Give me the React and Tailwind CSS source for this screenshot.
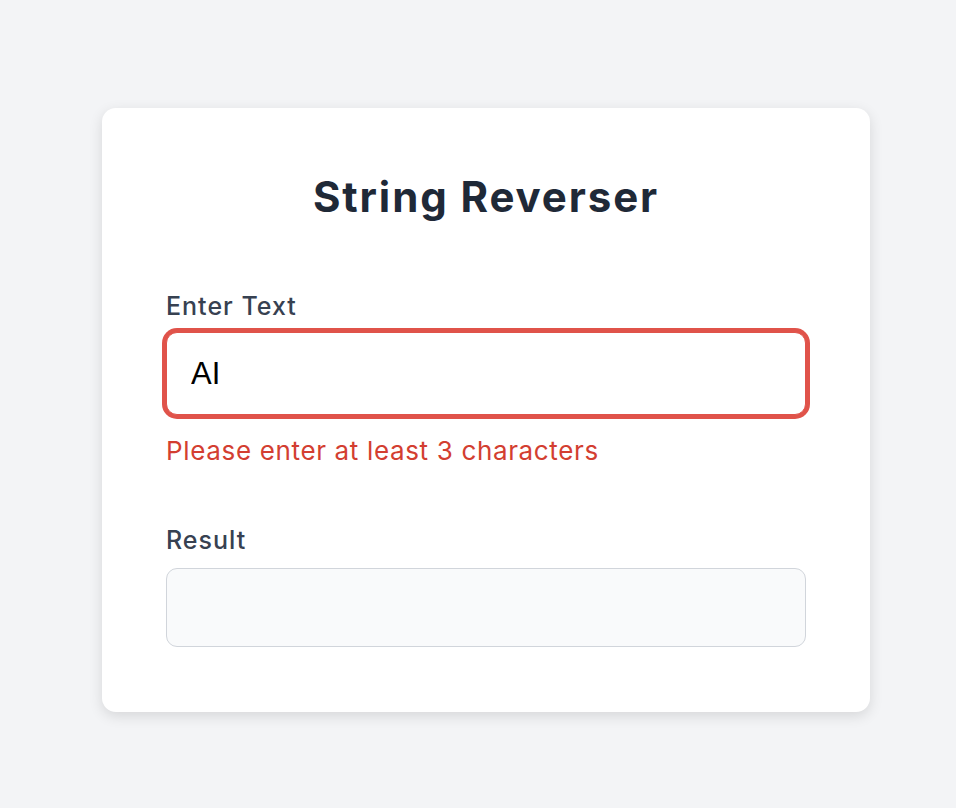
import { useState } from 'react';

export default function App() {
    const [text, setText] = useState('AI');
    const tooShort = text.length < 3;
    const result = tooShort ? '' : text.split('').reverse().join('');

    return (
        <div className="min-h-screen bg-[#f3f4f6] pt-[108px] pb-[96px]" style={{ fontFamily: 'Inter, "Noto Sans", sans-serif' }}>
            <div className="w-[768px] ml-[102px] bg-white rounded-[14px] shadow-[0_4px_14px_rgba(0,0,0,0.12)] px-16 pt-[69px] pb-[65px]">
                <h1 className="text-[42px] leading-[40px] font-bold tracking-[0.045em] text-[#1f2937] text-center mb-[73px]">String Reverser</h1>

                <label className="block text-[25px] leading-[32px] font-medium tracking-[0.04em] text-[#374151] mb-[10px]">Enter Text</label>
                <input
                    type="text"
                    value={text}
                    onChange={e => setText(e.target.value)}
                    className="block w-full h-[83px] px-[24px] rounded-[11px] border-[1.5px] border-[#e0534a] ring-4 ring-[#e0534a] outline-none bg-white text-black text-[31px]"
                    style={{ fontFamily: '"Liberation Sans", Arial, sans-serif' }}
                />
                {tooShort && (
                    <p className="mt-[20px] text-[26px] leading-[32px] tracking-[0.025em] text-[#d33e31]">Please enter at least 3 characters</p>
                )}

                <label className="block mt-[57px] text-[25px] leading-[32px] font-medium tracking-[0.04em] text-[#374151] mb-[12px]">Result</label>
                <div className="h-[79px] w-full rounded-[11px] border-[1.5px] border-[#d1d5db] bg-[#f9fafb] px-[24px] flex items-center text-[24px] text-[#1f2937]">
                    {result}
                </div>
            </div>
        </div>
    );
}
